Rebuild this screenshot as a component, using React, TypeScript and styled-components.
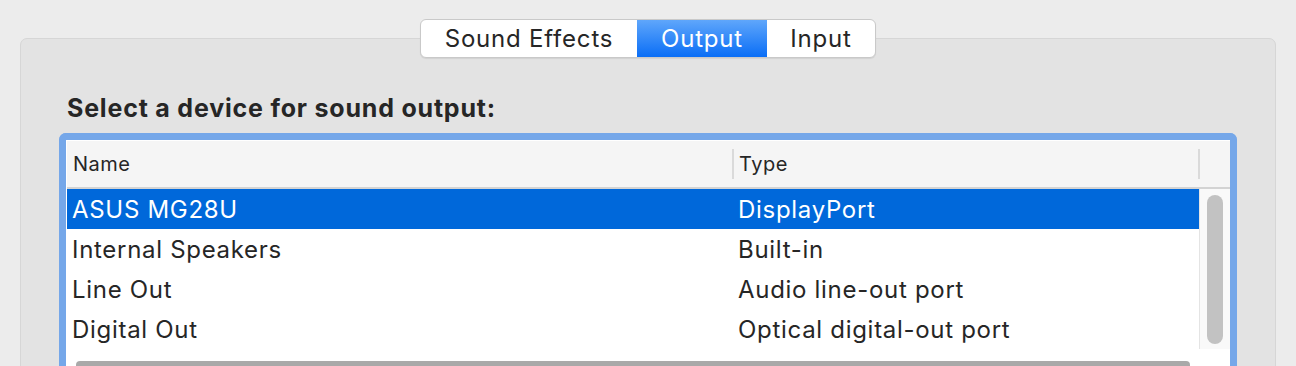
import React from "react";
import styled, { createGlobalStyle, css } from "styled-components";

const GlobalStyle = createGlobalStyle`
  html, body {
    margin: 0;
    padding: 0;
    background: #ececec;
    overflow: hidden;
  }
  body {
    font-family: Inter, "Noto Sans", "Liberation Sans", sans-serif;
    color: #262626;
    -webkit-font-smoothing: antialiased;
  }
`;

const Page = styled.div`
  width: 1296px;
  height: 366px;
  padding-top: 38px;
  box-sizing: border-box;
  overflow: hidden;
`;

const Panel = styled.div`
  margin: 0 20px;
  height: 400px;
  background: #e3e3e3;
  border: 1px solid #d6d6d6;
  border-radius: 7px;
  display: flex;
  flex-direction: column;
`;

const TabBar = styled.div`
  align-self: center;
  margin-top: -20px;
  display: flex;
  height: 39px;
  box-sizing: border-box;
  background: #ffffff;
  border: 1px solid #c9c9c9;
  border-radius: 6px;
  box-shadow: 0 1px 1px rgba(0, 0, 0, 0.08);
  overflow: hidden;
`;

const Tab = styled.div<{ $active?: boolean; $w: number }>`
  width: ${(p) => p.$w}px;
  display: flex;
  align-items: center;
  justify-content: center;
  font-size: 24px;
  letter-spacing: 0.8px;
  color: #262626;
  ${(p) =>
    p.$active &&
    css`
      color: #ffffff;
      background: linear-gradient(#5fa6fb, #0a6ef6);
    `}
`;

const Heading = styled.div`
  margin: 35px 0 0 46px;
  font-size: 25px;
  line-height: 30px;
  letter-spacing: 0.8px;
  font-weight: 700;
  color: #262626;
`;

const TableFrame = styled.div`
  margin: 10px 0 0 38px;
  width: 1178px;
  box-sizing: border-box;
  border: 7px solid #75a7e9;
  border-bottom: none;
  border-radius: 7px 7px 0 0;
  background: #ffffff;
  display: flex;
  flex-direction: column;
  padding-left: 1px;
`;

const HeaderRow = styled.div`
  height: 46px;
  margin-top: 1px;
  display: grid;
  grid-template-columns: 665px 466px 1fr;
  background: #f5f5f5;
  border-bottom: 2px solid #d3d3d3;
`;

const HeaderCell = styled.div<{ $divider?: boolean }>`
  display: flex;
  align-items: center;
  padding-left: ${(p) => (p.$divider ? "5px" : "6px")};
  font-size: 20px;
  letter-spacing: 0.5px;
  color: #262626;
  border-left: ${(p) => (p.$divider ? "2px solid #dadada" : "none")};
  margin: ${(p) => (p.$divider ? "8px 0" : "0")};
`;

const Body = styled.div`
  display: flex;
  height: 160px;
`;

const RowList = styled.div`
  flex: 1;
  display: flex;
  flex-direction: column;
`;

const Row = styled.div<{ $selected?: boolean }>`
  height: 40px;
  display: grid;
  grid-template-columns: 665px 1fr;
  align-items: center;
  font-size: 24px;
  letter-spacing: 0.7px;
  color: ${(p) => (p.$selected ? "#ffffff" : "#262626")};
  background: ${(p) => (p.$selected ? "#0068da" : "transparent")};
`;

const Cell = styled.div<{ $pad: number }>`
  padding-left: ${(p) => p.$pad}px;
  white-space: nowrap;
`;

const VScroll = styled.div`
  width: 31px;
  background: #f9f9f9;
  border-left: 1px solid #e4e4e4;
  box-sizing: border-box;
  padding: 6px 0 0 7px;
`;

const VThumb = styled.div`
  width: 16px;
  height: 149px;
  border-radius: 8px;
  background: #c2c2c2;
`;

const HScroll = styled.div`
  padding: 12px 40px 0 9px;
`;

const HThumb = styled.div`
  height: 8px;
  border-radius: 4px;
  background: #a9a9a9;
`;

const devices = [
  { name: "ASUS MG28U", type: "DisplayPort" },
  { name: "Internal Speakers", type: "Built-in" },
  { name: "Line Out", type: "Audio line-out port" },
  { name: "Digital Out", type: "Optical digital-out port" },
];

export default function App() {
  return (
    <>
      <GlobalStyle />
      <Page>
        <Panel>
          <TabBar>
            <Tab $w={216}>Sound Effects</Tab>
            <Tab $w={130} $active>
              Output
            </Tab>
            <Tab $w={108}>Input</Tab>
          </TabBar>
          <Heading>Select a device for sound output:</Heading>
          <TableFrame>
            <HeaderRow>
              <HeaderCell>Name</HeaderCell>
              <HeaderCell $divider>Type</HeaderCell>
              <HeaderCell $divider />
            </HeaderRow>
            <Body>
              <RowList>
                {devices.map((d, i) => (
                  <Row key={d.name} $selected={i === 0}>
                    <Cell $pad={5}>{d.name}</Cell>
                    <Cell $pad={6}>{d.type}</Cell>
                  </Row>
                ))}
              </RowList>
              <VScroll>
                <VThumb />
              </VScroll>
            </Body>
            <HScroll>
              <HThumb />
            </HScroll>
          </TableFrame>
        </Panel>
      </Page>
    </>
  );
}
